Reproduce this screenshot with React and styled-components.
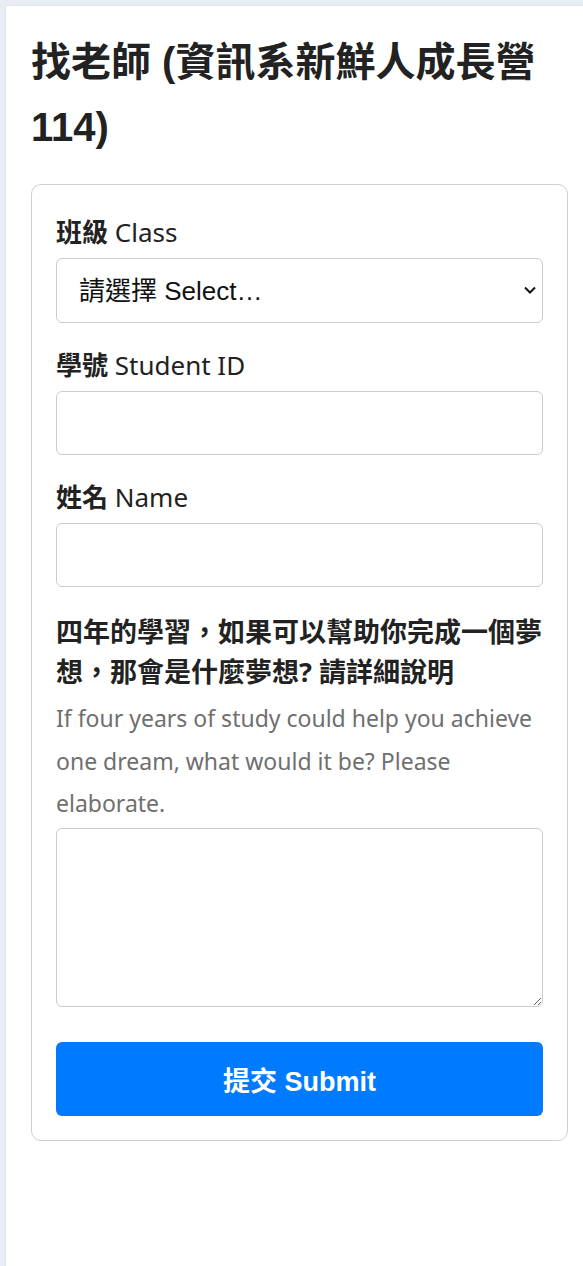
import React from "react";
import styled, { createGlobalStyle } from "styled-components";

const GlobalStyle = createGlobalStyle`
  html, body {
    margin: 0;
    padding: 0;
    background: #e8ecf4;
  }
  * {
    box-sizing: border-box;
  }
`;

const Page = styled.div`
  margin: 6px 0 0 6px;
  min-height: calc(100vh - 6px);
  background: #fff;
  box-shadow: 0 0 1px rgba(0, 0, 0, 0.18);
  padding: 0 15px 0 25px;
  overflow: hidden;
  font-family: "Noto Sans", "Noto Sans CJK TC", sans-serif;
  color: #212529;
`;

const Title = styled.h1`
  margin: 24px 0 24px;
  font-family: "Liberation Sans", "Noto Sans CJK TC", sans-serif;
  font-size: 40px;
  line-height: 65px;
  font-weight: 700;
  color: #222;
`;

const Card = styled.form`
  border: 1px solid #cfcfcf;
  border-radius: 10px;
  padding: 27px 24px 24px;
  display: flex;
  flex-direction: column;
`;

const Field = styled.div`
  display: flex;
  flex-direction: column;
  margin-bottom: ${(p) => p.$gap || 22}px;
`;

const Label = styled.label`
  display: block;
  height: 41px;
  font-size: 26px;
  line-height: 37px;
  margin-bottom: 5px;
  color: #222;
  white-space: nowrap;
`;

const Zh = styled.span`
  font-family: "Noto Sans CJK TC", sans-serif;
  font-weight: 700;
`;

const Question = styled.label`
  display: block;
  height: 80px;
  font-family: "Noto Sans", "Noto Sans CJK TC", sans-serif;
  font-size: 27px;
  line-height: 40px;
  font-weight: 700;
  color: #222;
`;

const Hint = styled.div`
  font-size: 23px;
  line-height: 42.5px;
  height: 128px;
  color: #6f6f6f;
  margin: 5px 0 3px;
`;

const SelectWrap = styled.div`
  position: relative;
`;

const Select = styled.select`
  appearance: none;
  -webkit-appearance: none;
  width: 100%;
  height: 65px;
  padding: 0 22px;
  border: 1px solid #cccccc;
  border-radius: 6px;
  background: #fff;
  font-family: "Liberation Sans", "Noto Sans CJK TC", sans-serif;
  font-size: 26px;
  color: #111;
`;

const Chevron = styled.svg`
  position: absolute;
  right: 7px;
  top: 28px;
  width: 12px;
  height: 8px;
  pointer-events: none;
`;

const Input = styled.input`
  width: 100%;
  height: 64px;
  padding: 0 22px;
  border: 1px solid #cccccc;
  border-radius: 6px;
  font-size: 26px;
  font-family: "Liberation Sans", "Noto Sans CJK TC", sans-serif;
`;

const TextArea = styled.textarea`
  width: 100%;
  height: 179px;
  padding: 12px 22px;
  border: 1px solid #cccccc;
  border-radius: 6px;
  font-size: 26px;
  font-family: "Liberation Sans", "Noto Sans CJK TC", sans-serif;
  display: block;
`;

const Submit = styled.button`
  height: 74px;
  border: 0;
  border-radius: 6px;
  background: #007bff;
  color: #fff;
  font-family: "Liberation Sans", "Noto Sans CJK TC", sans-serif;
  font-size: 27px;
  font-weight: 700;
  cursor: pointer;
`;

export default function App() {
  return (
    <>
      <GlobalStyle />
      <Page>
        <Title>找老師 (資訊系新鮮人成長營 114)</Title>
        <Card onSubmit={(e) => e.preventDefault()}>
          <Field>
            <Label htmlFor="cls">
              <Zh>班級</Zh> Class
            </Label>
            <SelectWrap>
              <Select id="cls" defaultValue="">
                <option value="">請選擇 Select…</option>
                <option value="a">資工一甲</option>
                <option value="b">資工一乙</option>
              </Select>
              <Chevron viewBox="0 0 12 8">
                <path d="M1 1.5 L6 6.5 L11 1.5" fill="none" stroke="#111" strokeWidth="2" />
              </Chevron>
            </SelectWrap>
          </Field>
          <Field>
            <Label htmlFor="sid">
              <Zh>學號</Zh> Student ID
            </Label>
            <Input id="sid" type="text" />
          </Field>
          <Field $gap={25}>
            <Label htmlFor="name">
              <Zh>姓名</Zh> Name
            </Label>
            <Input id="name" type="text" />
          </Field>
          <Field $gap={35}>
            <Question htmlFor="dream">
              四年的學習，如果可以幫助你完成一個夢想，那會是什麼夢想? 請詳細說明
            </Question>
            <Hint>
              If four years of study could help you achieve one dream, what would it be? Please elaborate.
            </Hint>
            <TextArea id="dream" />
          </Field>
          <Submit type="submit">提交 Submit</Submit>
        </Card>
      </Page>
    </>
  );
}
